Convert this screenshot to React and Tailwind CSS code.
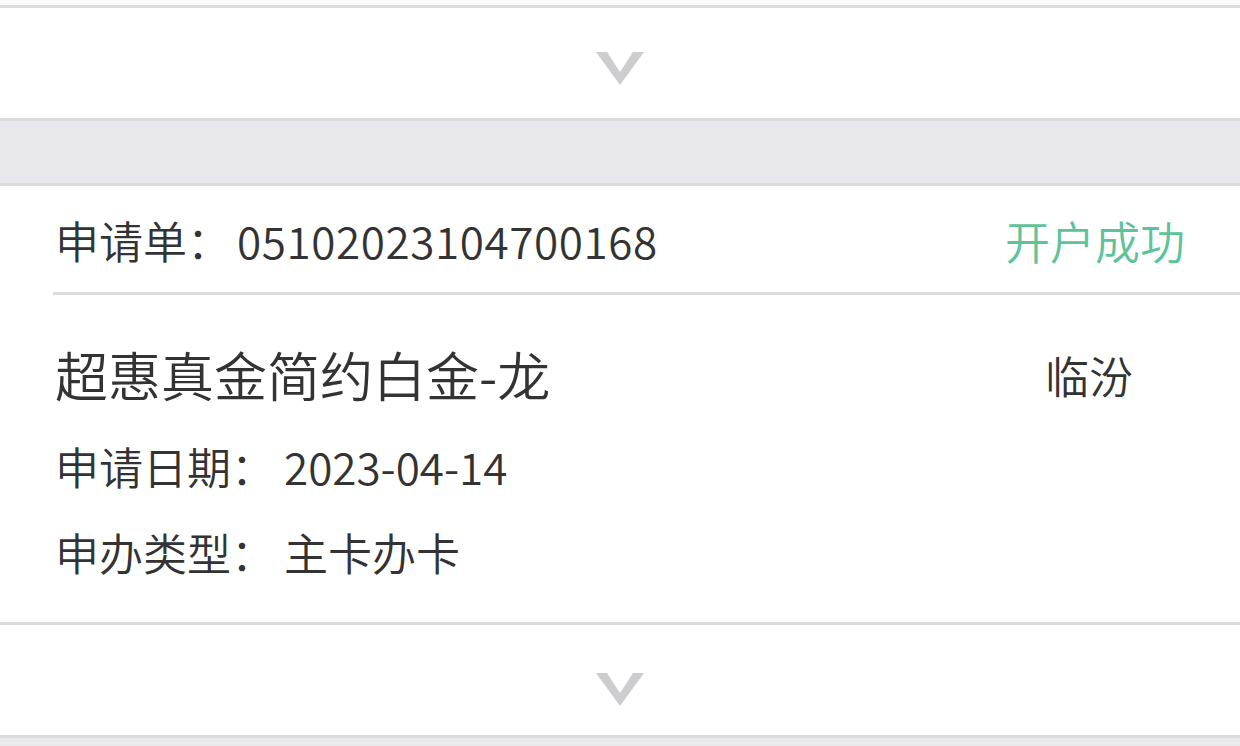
import React from 'react';

const font = { fontFamily: '"Noto Sans CJK SC", "Noto Sans", sans-serif' };

function Chevron() {
  return (
    <svg width="48" height="36" viewBox="0 0 48 36" className="blur-[0.6px]">
      <polygon points="0,2 11,2 24,22 37,2 48,2 24,35" fill="#cdcdcf" />
    </svg>
  );
}

function ExpandRow({ offset }) {
  return (
    <div className="flex justify-center bg-white h-[110px]">
      <div className={offset}>
        <Chevron />
      </div>
    </div>
  );
}

function Field({ label, value }) {
  return (
    <div className="flex text-[44px] leading-none">
      <span>{label}</span>
      <span className="ml-[9px]">{value}</span>
    </div>
  );
}

export default function App() {
  return (
    <div className="w-[1240px] h-[746px] overflow-hidden bg-[#e9e8ed] text-[#333333] font-[350]" style={font}>
      {/* previous card tail */}
      <div className="h-[5px] bg-[#fafafa]" />
      <div className="h-[3px] bg-[#dcdcdc]" />
      <ExpandRow offset="pt-[42px]" />
      <div className="h-[3px] bg-[#dcdcdc]" />

      {/* spacer */}
      <div className="h-[62px] bg-[#e9e8ed]" />
      <div className="h-[3px] bg-[#dcdcdc]" />

      {/* application card */}
      <div className="bg-white h-[436px]">
        <div className="flex items-center justify-between h-[106px] pl-[55px] pr-[55px] pt-[2px]">
          <div className="flex text-[44px] leading-none">
            <span>申请单：</span>
            <span className="ml-[6px] tracking-[0.6px]">05102023104700168</span>
          </div>
          <div className="text-[45px] leading-none text-[#5ec398]">开户成功</div>
        </div>
        <div className="ml-[53px] h-[3px] bg-[#dcdcdc]" />
        <div className="pl-[55px] pr-[107px]">
          <div className="flex items-center justify-between pt-[53px]">
            <div className="text-[53px] leading-none">超惠真金简约白金-龙</div>
            <div className="text-[44px] leading-none">临汾</div>
          </div>
          <div className="pt-[43px]">
            <Field label="申请日期：" value="2023-04-14" />
          </div>
          <div className="pt-[42px]">
            <Field label="申办类型：" value="主卡办卡" />
          </div>
        </div>
      </div>
      <div className="h-[3px] bg-[#dcdcdc]" />
      <ExpandRow offset="pt-[46px]" />
      <div className="h-[3px] bg-[#dcdcdc]" />
    </div>
  );
}
